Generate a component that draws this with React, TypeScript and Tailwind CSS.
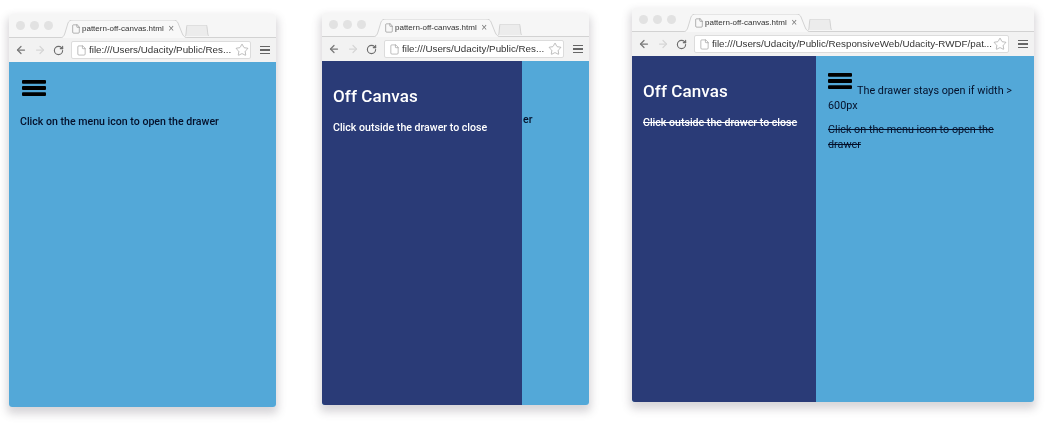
import { ArrowLeft, ArrowRight, File, RotateCw, Star } from "lucide-react";
import type { ReactNode } from "react";

function MenuBars({ className }: { className: string }) {
  return (
    <svg viewBox="0 0 24 16" className={className} aria-hidden>
      <rect x="0" y="0" width="24" height="3.8" rx="1" fill="#000" />
      <rect x="0" y="6.1" width="24" height="3.8" rx="1" fill="#000" />
      <rect x="0" y="12.2" width="24" height="3.8" rx="1" fill="#000" />
    </svg>
  );
}

function TabShape({ className, fill }: { className: string; fill: string }) {
  return (
    <svg viewBox="0 0 130 18" preserveAspectRatio="none" className={className} aria-hidden>
      <path
        d="M0 18 C4 18 5 16 6 13 L9 3 C10 1 11 0 14 0 L114 0 C117 0 118 1 119 3 L123 13 C124 16 126 18 130 18"
        fill={fill}
        stroke="#d2d2d2"
        strokeWidth="1"
        vectorEffect="non-scaling-stroke"
      />
    </svg>
  );
}

function BrowserWindow({
  url,
  className,
  children
}: {
  url: string;
  className: string;
  children: ReactNode;
}) {
  return (
    <div
      className={`flex flex-col overflow-hidden rounded-[3px] font-['Roboto',sans-serif] shadow-[0_5px_9px_2px_rgba(90,85,95,0.24)] ${className}`}
    >
      <div className="flex h-[24px] shrink-0 items-end border-b border-[#d2d2d2] bg-[#f6f6f6] pl-[7px]">
        <div className="mb-[7px] flex gap-[5px] self-end">
          <span className="size-[9px] rounded-full bg-[#e2e2e2]" />
          <span className="size-[9px] rounded-full bg-[#e2e2e2]" />
          <span className="size-[9px] rounded-full bg-[#e2e2e2]" />
        </div>
        <div className="relative mb-[-1px] ml-[6px] flex h-[18px] w-[130px] items-center pl-[12px]">
          <TabShape className="absolute inset-0 h-full w-full" fill="#f8f8f8" />
          <File className="relative size-[10px] shrink-0 text-[#888]" strokeWidth={1.5} />
          <span className="relative ml-[1px] whitespace-nowrap font-['Liberation_Sans',sans-serif] text-[8px] leading-none text-[#333]">
            pattern-off-canvas.html
          </span>
          <span className="relative ml-auto mr-[15px] font-['Liberation_Sans',sans-serif] text-[10px] leading-none text-[#777]">
            ×
          </span>
        </div>
        <div className="relative ml-[-4px] mb-[1px] h-[11px] w-[24px]">
          <TabShape className="absolute inset-0 h-full w-full" fill="#ececec" />
        </div>
      </div>
      <div className="flex h-[24px] shrink-0 items-center bg-[#f2f2f2] pl-[6px] pr-[6px]">
        <ArrowLeft className="size-[12px] text-[#7a7a7a]" strokeWidth={2.5} />
        <ArrowRight className="ml-[7px] size-[12px] text-[#d6d6d6]" strokeWidth={2.5} />
        <RotateCw className="ml-[7px] size-[11px] text-[#6e6e6e]" strokeWidth={2.5} />
        <div className="ml-[7px] flex h-[18px] min-w-0 flex-1 items-center rounded-[2px] border border-[#dcdcdc] bg-white pl-[4px] pr-[1px]">
          <File className="size-[11px] shrink-0 text-[#999]" strokeWidth={1.4} />
          <span className="ml-[2px] flex-1 whitespace-nowrap font-['Liberation_Sans',sans-serif] text-[9.8px] leading-none text-[#333]">
            {url}
          </span>
          <Star className="size-[14px] shrink-0 text-[#9a9a9a]" strokeWidth={1.1} />
        </div>
        <div className="ml-[9px] flex w-[10px] flex-col gap-[2px]">
          <span className="h-[1.5px] bg-[#666]" />
          <span className="h-[1.5px] bg-[#666]" />
          <span className="h-[1.5px] bg-[#666]" />
        </div>
      </div>
      <div className="flex flex-1 bg-[#53a8d8] text-[10.6px] font-medium leading-[14.5px] text-[#04102a]">
        {children}
      </div>
    </div>
  );
}

function Drawer({ width, struck }: { width: string; struck: boolean }) {
  return (
    <aside className={`shrink-0 bg-[#2a3b77] pl-[11px] pt-[24px] text-white ${width}`}>
      <h2 className="text-[17px] font-medium leading-[22px] tracking-[0.1px]">Off Canvas</h2>
      <p className={`mt-[13px] text-[10.6px] leading-[16px] ${struck ? "line-through" : ""}`}>
        Click outside the drawer to close
      </p>
    </aside>
  );
}

export default function App() {
  return (
    <div className="flex h-[428px] w-[1046px] items-start overflow-hidden bg-white pl-[9px] blur-[0.4px]">
      <BrowserWindow
        url="file:///Users/Udacity/Public/Res..."
        className="mt-[14px] h-[393px] w-[267px]"
      >
        <div className="pl-[11px] pt-[18px]">
          <MenuBars className="ml-[2px] h-[16px] w-[24px]" />
          <p className="mt-[19px]">Click on the menu icon to open the drawer</p>
        </div>
      </BrowserWindow>

      <BrowserWindow
        url="file:///Users/Udacity/Public/Res..."
        className="ml-[46px] mt-[13px] h-[392px] w-[267px]"
      >
        <Drawer width="w-[200px]" struck={false} />
        <p className="mt-[52px] pl-[1px]">er</p>
      </BrowserWindow>

      <BrowserWindow
        url="file:///Users/Udacity/Public/ResponsiveWeb/Udacity-RWDF/pat..."
        className="ml-[43px] mt-[8px] h-[394px] w-[402px]"
      >
        <Drawer width="w-[184px]" struck />
        <div className="flex-1 pl-[12px] pr-[16px] pt-[17px] text-[10.8px] font-normal">
          <p>
            <MenuBars className="mr-[5px] inline-block h-[16px] w-[24px] align-[5px]" />
            The drawer stays open if width &gt; 600px
          </p>
          <p className="mt-[10px] line-through">
            Click on the menu icon to open the drawer
          </p>
        </div>
      </BrowserWindow>
    </div>
  );
}
